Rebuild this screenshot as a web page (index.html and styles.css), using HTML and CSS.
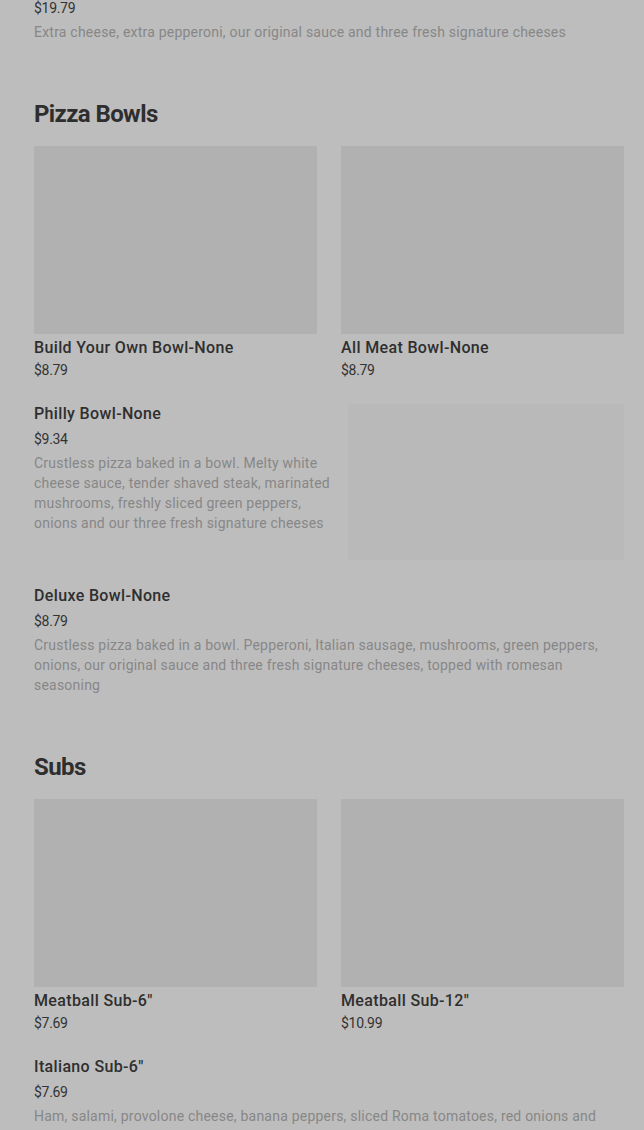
FILE: index.html
```html
<!DOCTYPE html>
<html lang="en">
<head>
<meta charset="utf-8">
<title>Menu</title>
<link rel="stylesheet" href="styles.css">
</head>
<body>
<main class="menu">
  <section class="section first">
    <div class="item">
      <div class="price">$19.79</div>
      <div class="desc">Extra cheese, extra pepperoni, our original sauce and three fresh signature cheeses</div>
    </div>
  </section>

  <section class="section">
    <h2 class="heading">Pizza Bowls</h2>
    <div class="grid">
      <div class="card">
        <div class="photo"></div>
        <div class="title">Build Your Own Bowl-None</div>
        <div class="price tight">$8.79</div>
      </div>
      <div class="card">
        <div class="photo"></div>
        <div class="title">All Meat Bowl-None</div>
        <div class="price tight">$8.79</div>
      </div>
    </div>
    <div class="row">
      <div class="text">
        <div class="title">Philly Bowl-None</div>
        <div class="price">$9.34</div>
        <div class="desc">Crustless pizza baked in a bowl. Melty white cheese sauce, tender shaved steak, marinated mushrooms, freshly sliced green peppers, onions and our three fresh signature cheeses</div>
      </div>
      <div class="thumb"></div>
    </div>
    <div class="row">
      <div class="text wide">
        <div class="title">Deluxe Bowl-None</div>
        <div class="price">$8.79</div>
        <div class="desc">Crustless pizza baked in a bowl. Pepperoni, Italian sausage, mushrooms, green peppers, onions, our original sauce and three fresh signature cheeses, topped with romesan seasoning</div>
      </div>
    </div>
  </section>

  <section class="section">
    <h2 class="heading">Subs</h2>
    <div class="grid">
      <div class="card">
        <div class="photo"></div>
        <div class="title">Meatball Sub-6"</div>
        <div class="price tight">$7.69</div>
      </div>
      <div class="card">
        <div class="photo"></div>
        <div class="title">Meatball Sub-12"</div>
        <div class="price tight">$10.99</div>
      </div>
    </div>
    <div class="row">
      <div class="text wide">
        <div class="title">Italiano Sub-6"</div>
        <div class="price">$7.69</div>
        <div class="desc">Ham, salami, provolone cheese, banana peppers, sliced Roma tomatoes, red onions and Italian dressing</div>
      </div>
    </div>
  </section>
</main>
</body>
</html>
```

FILE: styles.css
```css
html, body {
  margin: 0;
  padding: 0;
  background: #bdbdbd;
  overflow: hidden;
}

body {
  font-family: Roboto, "Liberation Sans", Arial, sans-serif;
  color: #2c2c2c;
}

.menu {
  margin-top: -5px;
  padding: 0 20px 0 34px;
}

.section {
  margin-top: 56px;
}

.section.first {
  margin-top: 0;
}

.heading {
  margin: 0 0 16px;
  font-size: 24px;
  line-height: 32px;
  font-weight: 700;
  color: #2e2e2e;
  letter-spacing: -0.6px;
}

.grid {
  display: grid;
  grid-template-columns: 1fr 1fr;
  column-gap: 24px;
}

.photo {
  height: 188px;
  background: #b1b1b1;
}

.card .title {
  margin-top: 2px;
}

.title {
  font-size: 16px;
  line-height: 24px;
  font-weight: 500;
  color: #2f2f2f;
  letter-spacing: 0.35px;
}

.price {
  margin-top: 3px;
  font-size: 14px;
  line-height: 20px;
  color: #333333;
  letter-spacing: -0.3px;
}

.price.tight {
  margin-top: 0;
}

.desc {
  margin-top: 4px;
  font-size: 14px;
  line-height: 20px;
  color: #878787;
  letter-spacing: 0.22px;
}

.row {
  display: flex;
  gap: 12px;
  margin-top: 22px;
}

.text {
  flex: 0 0 302px;
}

.text.wide {
  flex: 1 1 auto;
}

.thumb {
  flex: 1 1 auto;
  height: 156px;
  margin: 2px 0;
  background: #b9b9b9;
}
```
